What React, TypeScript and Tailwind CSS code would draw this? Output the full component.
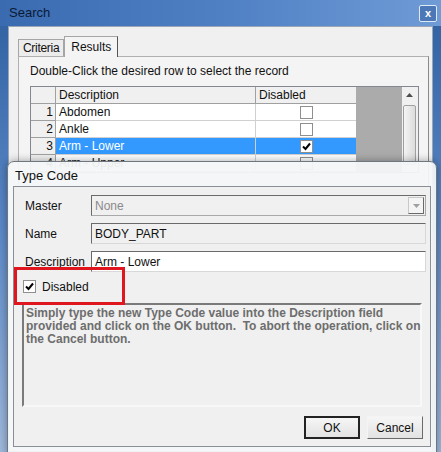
import type { ReactNode } from "react";

const rows = [
  { n: 1, text: "Abdomen", checked: false },
  { n: 2, text: "Ankle", checked: false },
  { n: 3, text: "Arm - Lower", checked: true, selected: true },
  { n: 4, text: "Arm - Upper", checked: false },
];

const ui = { fontFamily: '"Liberation Sans", Arial, sans-serif' };

function Check({ checked }: { checked: boolean }) {
  return (
    <span className="flex h-[13px] w-[13px] items-center justify-center border border-[#8e8f8f] bg-white">
      {checked && (
        <svg width="9" height="9" viewBox="0 0 9 9">
          <path d="M1 4.5 L3.5 7 L8 1.5" fill="none" stroke="#000" strokeWidth="2" />
        </svg>
      )}
    </span>
  );
}

function Field({ label, children }: { label: string; children: ReactNode }) {
  return (
    <div className="flex h-[21px] items-center">
      <span className="w-[77px] shrink-0 pl-[11px] text-[12px] text-[#111]">{label}</span>
      {children}
    </div>
  );
}

export default function App() {
  return (
    <div
      className="relative h-[452px] w-[441px] overflow-hidden bg-gradient-to-b from-[#2f5f9f] via-[#5b88c7] to-[#9fb9dc]"
      style={ui}
    >
      {/* Search window title bar */}
      <div className="flex h-[26px] items-center justify-between bg-gradient-to-r from-[#3a6ab0] via-[#4f80c4] to-[#6f9bd6] pl-[9px] pr-[4px]">
        <span className="text-[13px] text-[#0b1a33]">Search</span>
        <span className="flex h-[17px] w-[18px] items-center justify-center rounded-[2px] border border-[#dfe8f5] bg-[#4d78b8] text-[11px] font-bold leading-none text-white">
          x
        </span>
      </div>

      {/* Search client area */}
      <div className="mx-[8px] h-[426px] border border-[#9aa6b6] bg-[#f0f0f0] px-[9px] pt-[9px]">
        <div className="flex items-end">
          <div className="flex h-[17px] items-center border border-b-0 border-[#a5a5a5] bg-[#ececec] px-[4px] text-[12px] tracking-[-0.3px] text-[#111]">
            Criteria
          </div>
          <div className="relative z-10 -mb-px flex h-[21px] items-center border border-b-0 border-[#a5a5a5] border-r-[#555] bg-[#f4f4f4] px-[6px] text-[12px] text-[#111]">
            Results
          </div>
        </div>
        <div className="h-[380px] w-[411px] border border-[#b0b0b0] border-r-[#8a8a8a] bg-[#f4f4f4] px-[11px] pt-[7px]">
          <div className="text-[12px] leading-[14px] text-[#111]">Double-Click the desired row to select the record</div>
          <div className="mt-[8px] flex w-[389px] border border-[#828790] bg-[#ababab]">
            <div className="w-[325px] bg-white">
              <div className="flex h-[17px] bg-[#f0f0f0] text-[12px] text-[#111]">
                <div className="w-[25px] border-r border-b border-[#a0a0a0]" />
                <div className="flex w-[200px] items-center border-r border-b border-[#a0a0a0] pl-[3px]">Description</div>
                <div className="flex w-[100px] items-center border-b border-[#a0a0a0] pl-[3px]">Disabled</div>
              </div>
              {rows.map((r) => (
                <div key={r.n} className="flex h-[17px] text-[12px]">
                  <div className="flex w-[25px] items-center justify-end border-r border-b border-[#a0a0a0] bg-[#f0f0f0] pr-[2px] text-[#111]">
                    {r.n}
                  </div>
                  <div
                    className={`flex w-[200px] items-center border-r border-b border-[#d0d0d0] pl-[3px] ${
                      r.selected ? "bg-[#3399ff] text-white" : "text-[#111]"
                    }`}
                  >
                    {r.text}
                  </div>
                  <div
                    className={`flex w-[100px] items-center justify-center border-b border-[#d0d0d0] ${
                      r.selected ? "bg-[#3399ff]" : ""
                    }`}
                  >
                    <Check checked={r.checked} />
                  </div>
                </div>
              ))}
            </div>
            <div className="w-[47px]" />
            <div className="flex w-[17px] flex-col items-center bg-[#f0f0f0] pt-[6px]">
              <svg width="7" height="4" viewBox="0 0 7 4">
                <path d="M0 4 L3.5 0 L7 4 Z" fill="#4d4d4d" />
              </svg>
              <div className="mt-[8px] h-[60px] w-[13px] rounded-[2px] border border-[#a0a0a0] bg-gradient-to-r from-[#f4f4f4] to-[#dcdcdc]" />
            </div>
          </div>
        </div>
      </div>

      {/* Type Code dialog */}
      <div className="absolute left-[7px] top-[161px] h-[295px] w-[430px] rounded-t-[7px] border border-[#6e7780] bg-[#f3f5f7]/95 px-[5px] pb-[5px] shadow-[0_0_8px_rgba(0,0,0,0.35)]">
        <div className="flex h-[24px] items-center pl-[2px] pt-[3px] text-[13px] text-[#111]">Type Code</div>
        <div className="h-[261px] border border-[#8a8f96] bg-[#f0f0f0] pt-[8px]">
          <div className="flex flex-col gap-[7px]">
            <Field label="Master">
              <div className="flex h-[21px] w-[335px] items-center justify-between border border-[#a9a9a9] border-l-[#6a6a6a] border-t-[#6a6a6a] bg-[#f0f0f0] pl-[3px] pr-[1px] text-[12px] text-[#8a8a8a]">
                None
                <span className="flex h-[17px] w-[16px] items-center justify-center border border-[#c8c8c8] border-b-[#6a6a6a] border-r-[#6a6a6a] bg-[#f4f4f4]">
                  <svg width="7" height="4" viewBox="0 0 7 4">
                    <path d="M0 0 L7 0 L3.5 4 Z" fill="#a0a0a0" />
                  </svg>
                </span>
              </div>
            </Field>
            <Field label="Name">
              <div className="flex h-[21px] w-[335px] items-center border border-[#d8d8d8] border-l-[#6a6a6a] border-t-[#6a6a6a] bg-[#f0f0f0] pl-[3px] text-[12px] text-[#111]">
                BODY_PART
              </div>
            </Field>
            <Field label="Description">
              <div className="flex h-[21px] w-[335px] items-center border border-[#d8d8d8] border-l-[#6a6a6a] border-t-[#6a6a6a] bg-white pl-[3px] text-[12px] text-[#111]">
                Arm - Lower
              </div>
            </Field>
          </div>
          <div className="mt-[7px] flex h-[15px] items-center gap-[6px] pl-[9px] text-[12px] text-[#111]">
            <Check checked />
            <span>Disabled</span>
          </div>
          <div className="mx-[8px] mt-[9px] h-[104px] border-2 border-[#f8f8f8] border-l-[#7a7a7a] border-t-[#7a7a7a] bg-[#f0f0f0] pl-[2px] pt-[2px] text-[12px] leading-[13px] font-bold whitespace-nowrap text-[#6d6d6d]">
            Simply type the new Type Code value into the Description field
            <br />
            provided and click on the OK button.&nbsp; To abort the operation, click on
            <br />
            the Cancel button.
          </div>
          <div className="mt-[9px] flex justify-end gap-[7px] pr-[7px]">
            <button className="h-[23px] w-[56px] border-2 border-[#222] bg-gradient-to-b from-[#f6f6f6] to-[#e2e2e2] text-[12px] text-[#111]">
              OK
            </button>
            <button className="h-[23px] w-[56px] border border-[#f4f4f4] border-b-[#6a6a6a] border-r-[#6a6a6a] bg-gradient-to-b from-[#f6f6f6] to-[#e2e2e2] text-[12px] text-[#111]">
              Cancel
            </button>
          </div>
        </div>
      </div>

      {/* annotation highlight */}
      <div className="absolute left-[14px] top-[267px] h-[38px] w-[111px] border-[3px] border-[#e0161f]" />
    </div>
  );
}
